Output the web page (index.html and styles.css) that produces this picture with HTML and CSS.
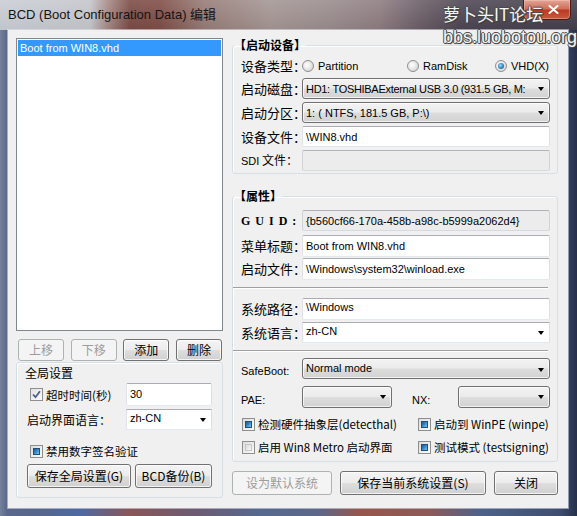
FILE: index.html
```
<!DOCTYPE html>
<html lang="zh-CN">
<head>
<meta charset="utf-8">
<title>BCD 编辑</title>
<link rel="stylesheet" href="styles.css">
</head>
<body>
<div class="window">
  <div class="titlebar">
    <div class="title">BCD (Boot Configuration Data) 编辑</div>
    <div class="close"><svg width="11" height="9" viewBox="0 0 11 9"><path d="M1.5 1 L9.5 8 M9.5 1 L1.5 8" stroke="#fff" stroke-width="2" stroke-linecap="round"/></svg></div>
  </div>
  <div class="client">
    <div class="left">
      <div class="list"><div class="item sel">Boot from WIN8.vhd</div></div>
      <div class="btnrow">
        <div class="btn dis w46">上移</div>
        <div class="btn dis w46">下移</div>
        <div class="btn w46">添加</div>
        <div class="btn w46">删除</div>
      </div>
      <div class="gbox">
        <div class="gbox-title">全局设置</div>
        <div class="grow r1">
          <div class="chk"><span class="cb checked"><svg width="11" height="11" viewBox="0 0 11 11"><path d="M2 5.5 L4.5 8.2 L9 2.2" fill="none" stroke="#4a5d8c" stroke-width="1.8"/></svg></span><span>超时时间(秒)</span></div>
          <div class="tb tb-timeout">30</div>
        </div>
        <div class="grow r2">
          <div class="glabel">启动界面语言：</div>
          <div class="ecombo w86"><span class="ct">zh-CN</span><i class="arrow"></i></div>
        </div>
        <div class="grow r3">
          <div class="chk"><span class="cb fill"></span><span>禁用数字签名验证</span></div>
        </div>
        <div class="grow r4">
          <div class="btn w104">保存全局设置(G)</div>
          <div class="btn w77">BCD备份(B)</div>
        </div>
      </div>
    </div>
    <div class="right">
      <fieldset class="grp g1">
        <legend>【启动设备】</legend>
        <div class="frow fr-type">
          <div class="flabel">设备类型：</div>
          <div class="radios">
            <div class="rad rw1"><span class="rb"></span><span>Partition</span></div>
            <div class="rad rw2"><span class="rb"></span><span>RamDisk</span></div>
            <div class="rad"><span class="rb on"></span><span>VHD(X)</span></div>
          </div>
        </div>
        <div class="frow mt3">
          <div class="flabel">启动磁盘：</div>
          <div class="combo w248"><span class="ct tight">HD1: TOSHIBAExternal USB 3.0 (931.5 GB, M:</span><i class="arrow"></i></div>
        </div>
        <div class="frow mt3">
          <div class="flabel">启动分区：</div>
          <div class="combo w248"><span class="ct">1: ( NTFS, 181.5 GB, P:\)</span><i class="arrow"></i></div>
        </div>
        <div class="frow mt3">
          <div class="flabel">设备文件：</div>
          <div class="tb w248 h21 mid">\WIN8.vhd</div>
        </div>
        <div class="frow mt3">
          <div class="flabel sdi"><span class="lat">SDI</span> 文件：</div>
          <div class="tb ro w248 h21"></div>
        </div>
      </fieldset>
      <fieldset class="grp g2">
        <legend>【属性】</legend>
        <div class="frow mt7">
          <div class="flabel guid">GUID:</div>
          <div class="tb ro w248 h21 mid">{b560cf66-170a-458b-a98c-b5999a2062d4}</div>
        </div>
        <div class="frow mt4">
          <div class="flabel">菜单标题：</div>
          <div class="tb w248 h22 mid">Boot from WIN8.vhd</div>
        </div>
        <div class="frow mt1">
          <div class="flabel">启动文件：</div>
          <div class="tb w248 h22 mid">\Windows\system32\winload.exe</div>
        </div>
        <div class="sep"></div>
        <div class="frow mt9">
          <div class="flabel">系统路径：</div>
          <div class="tb w248 h22">\Windows</div>
        </div>
        <div class="frow mt2">
          <div class="flabel">系统语言：</div>
          <div class="ecombo w248 h21"><span class="ct">zh-CN</span><i class="arrow"></i></div>
        </div>
        <div class="sep"></div>
        <div class="frow mt6">
          <div class="flabel lat low">SafeBoot:</div>
          <div class="combo w248 top"><span class="ct">Normal mode</span><i class="arrow"></i></div>
        </div>
        <div class="frow mt7 h22row">
          <div class="flabel lat low">PAE:</div>
          <div class="combo w90 h22"><span class="ct"></span><i class="arrow"></i></div>
          <div class="flabel lat low nx">NX:</div>
          <div class="combo w92 h22"><span class="ct"></span><i class="arrow"></i></div>
        </div>
        <div class="crow mt8">
          <div class="chk c1"><span class="cb fill"></span><span>检测硬件抽象层(detecthal)</span></div>
          <div class="chk"><span class="cb fill"></span><span>启动到 WinPE (winpe)</span></div>
        </div>
        <div class="crow mt7">
          <div class="chk c1"><span class="cb"></span><span>启用 Win8 Metro 启动界面</span></div>
          <div class="chk"><span class="cb fill"></span><span>测试模式 (testsigning)</span></div>
        </div>
      </fieldset>
      <div class="bottom">
        <div class="btn dis b1">设为默认系统</div>
        <div class="btn b2">保存当前系统设置(S)</div>
        <div class="btn b3">关闭</div>
      </div>
    </div>
  </div>
  <div class="wm wm1">萝卜头IT论坛</div>
  <div class="wm wm2">bbs.luobotou.org</div>
</div>
</body>
</html>
```
FILE: styles.css
```
* { box-sizing: border-box; }
html, body { margin: 0; padding: 0; }
body {
  width: 577px; height: 516px; overflow: hidden;
  font-family: "Liberation Sans", "Noto Sans CJK SC", sans-serif;
  font-size: 11px; color: #000;
}
.window {
  position: relative;
  width: 577px; height: 516px;
  display: flex; flex-direction: column;
  background:
    linear-gradient(90deg, #75819c 0px, #5a688c 7px, #56668c 40px, #4d6aa2 80px, #8a5658 130px, #6f5a70 190px, #56698f 260px, #5e6788 320px, #96564c 360px, #8c5a58 430px, #4e6289 480px, #3f4e70 560px, #26304a 577px);
}
.titlebar {
  flex: none; height: 30px;
  display: flex; align-items: flex-start;
  padding-left: 8px;
  background:
    linear-gradient(180deg, rgba(255,255,255,0.12), rgba(0,0,0,0.04)),
    linear-gradient(90deg, #c9cdd4 0px, #c4c6cb 90px, #a48884 108px, #7a4a44 130px, #7e4c45 160px, #967b76 205px, #a39593 270px, #998b8c 330px, #8c7b80 380px, #6a5c66 420px, #4d4552 460px, #433e4c 577px);
}
.title {
  margin-top: 7px;
  font-size: 13px; line-height: 16px; color: #141414;
  white-space: nowrap;
}
.close {
  margin-left: auto; margin-right: 6px;
  width: 48px; height: 20px;
  display: flex; align-items: center; justify-content: center;
  padding-left: 12px;
  border: 1px solid #4a1c18; border-top: none;
  border-radius: 0 0 5px 5px;
  background: linear-gradient(180deg, #e4a596 0%, #d0705d 45%, #bb3a22 55%, #c85a40 100%);
  box-shadow: inset 0 0 0 1px rgba(255,220,210,0.35);
}
.client {
  flex: none;
  margin: 0 9px 0 8px;
  height: 478px;
  background: #f0f0f0;
  box-shadow: 0 0 0 1px rgba(225,230,240,0.55);
  display: flex; gap: 9px;
  padding: 8px 10px 0 8px;
}
.left { width: 207px; flex: none; display: flex; flex-direction: column; }
.right { width: 326px; flex: none; display: flex; flex-direction: column; }

.list {
  height: 293px; background: #fff;
  border: 1px solid #828790; padding: 1px;
}
.item { height: 16px; line-height: 16px; padding-left: 2px; font-size: 11px; white-space: nowrap; }
.item.sel { background: #3399ff; color: #fff; }

.btn {
  display: flex; align-items: center; justify-content: center;
  height: 22px;
  border: 1px solid #707070; border-radius: 3px;
  background: linear-gradient(180deg, #f4f4f4 0%, #ececec 48%, #dedede 52%, #d0d0d0 100%);
  box-shadow: inset 0 0 0 1px rgba(255,255,255,0.75);
  font-family: "Noto Sans CJK SC", sans-serif; font-size: 12px; line-height: 16px;
  color: #000; white-space: nowrap;
}
.btn.dis {
  border-color: #adb2b5; background: #f4f4f4; box-shadow: none; color: #9c9c9c;
}
.btnrow { display: flex; justify-content: space-between; padding: 0 1px 0 2px; margin-top: 8px; }
.w46 { width: 46px; }
.w104 { width: 104px; height: 24px; }
.w77 { width: 77px; height: 24px; }

.gbox {
  margin-top: 1px; height: 136px;
  border: 1px solid #d5dfe5; border-radius: 3px;
  box-shadow: inset 1px 1px 0 #fff;
  display: flex; flex-direction: column;
  font-family: "Noto Sans CJK SC", sans-serif; font-size: 12px;
}
.gbox-title { margin-top: 2px; height: 16px; line-height: 16px; padding-left: 8px; }
.grow { display: flex; align-items: center; padding-right: 10px; }
.grow.r1 { margin-top: 2px; height: 23px; padding-left: 13px; }
.grow.r2 { margin-top: 3px; height: 21px; padding-left: 10px; }
.grow.r3 { margin-top: 13px; height: 16px; padding-left: 13px; }
.grow.r4 { margin-top: 5px; height: 24px; padding-left: 10px; gap: 4px; }
.glabel { line-height: 16px; }

.chk { display: flex; align-items: center; gap: 3px; line-height: 16px; white-space: nowrap;
  font-family: "Noto Sans CJK SC", sans-serif; font-size: 11.5px; }
.cb {
  flex: none; width: 13px; height: 13px;
  border: 1px solid #8e8f8f;
  background: linear-gradient(135deg, #dcdcdc, #fbfbfb);
  padding: 2px; display: flex;
}
.cb::before {
  content: ""; flex: 1;
  background: linear-gradient(135deg, #dadada, #f7f7f7);
  border: 1px solid #c6c6c6;
}
.cb.fill::before {
  background: linear-gradient(135deg, #1b5c9a 0%, #2f87c8 45%, #7cc9ef 100%);
  border-color: #1f4f7e;
}
.cb.checked { padding: 0; background: linear-gradient(135deg, #e0e0e0, #fdfdfd); }
.cb.checked::before { display: none; }

.tb {
  background: #fff;
  border: 1px solid; border-color: #abadb3 #dbdfe6 #e3e9ef #e2e3ea;
  border-radius: 2px;
  font-size: 11px; line-height: 14px;
  padding: 1px 3px; white-space: nowrap; overflow: hidden;
  font-family: "Liberation Sans", sans-serif;
}
.tb.mid { display: flex; align-items: center; padding-top: 0; padding-bottom: 0; }
.tb.ro { background: #ececec; border-color: #b0b3b8 #d0d3d8 #d6d9de #d0d3d8; }
.tb-timeout { margin-left: auto; width: 86px; height: 23px; padding-top: 3px; }

.ecombo, .combo {
  display: flex; align-items: center;
  font-size: 11px; line-height: 14px; font-family: "Liberation Sans", sans-serif;
  white-space: nowrap; overflow: hidden;
}
.ct { flex: 0 1 auto; min-width: 0; overflow: hidden; margin-right: 8px; }
.ct.tight { letter-spacing: -0.3px; }
.ecombo {
  background: #fff;
  border: 1px solid; border-color: #abadb3 #dbdfe6 #e3e9ef #e2e3ea;
  padding-left: 3px; align-items: flex-start; padding-top: 1px;
}
.ecombo.w86 { margin-left: auto; width: 86px; height: 21px; }
.combo {
  height: 21px;
  border: 1px solid #707070; border-radius: 3px;
  background: linear-gradient(180deg, #f3f3f3 0%, #ebebeb 48%, #dddddd 52%, #d2d2d2 100%);
  box-shadow: inset 0 0 0 1px rgba(255,255,255,0.7);
  padding-left: 3px;
}
.combo.top { align-items: flex-start; padding-top: 2px; }
.combo .arrow, .ecombo .arrow { align-self: center; }
.arrow {
  flex: none; margin-left: auto; margin-right: 5px;
  width: 0; height: 0;
  border-left: 3.5px solid transparent; border-right: 3.5px solid transparent;
  border-top: 4px solid #000;
}
.w248 { width: 248px; }
.w90 { width: 90px; }
.w92 { width: 92px; }
.h21 { height: 21px; }
.h22 { height: 22px; }

.grp {
  margin: 0; min-width: 0;
  border: 1px solid #d5dfe5; border-radius: 3px;
  box-shadow: inset 1px 1px 0 #fff;
  padding: 0 7px 2px 8px;
}
.grp legend {
  padding: 0; margin-left: -7px;
  height: 14px; line-height: 14px;
  font-family: "Noto Sans CJK SC", sans-serif; font-weight: bold; font-size: 12px;
}
.g2 { margin-top: 15px; padding-bottom: 6px; }
.frow { display: flex; align-items: center; }
.fr-type { margin-top: 5px; height: 18px; }
.flabel {
  flex: none; width: 61px;
  font-family: "Noto Sans CJK SC", sans-serif; font-size: 13px; line-height: 16px;
  white-space: nowrap;
}
.flabel .lat, .flabel.lat { font-family: "Liberation Sans", sans-serif; font-size: 11px; }
.flabel.sdi { font-size: 12px; }
.flabel.guid {
  font-family: "Liberation Serif", serif; font-weight: bold; font-size: 12px;
  letter-spacing: 5px;
}
.flabel.low { align-self: flex-end; line-height: 14px; margin-bottom: 1px; }
.flabel.nx { width: 46px; margin-left: 20px; }
.h22row { height: 22px; }
.radios { display: flex; align-items: center; }
.rad { display: flex; align-items: center; gap: 4px; font-size: 11px; white-space: nowrap; }
.rw1 { width: 105px; }
.rw2 { width: 88px; }
.rb {
  flex: none; width: 12px; height: 12px; border-radius: 50%;
  border: 1px solid #8e8f8f;
  background: radial-gradient(circle at 40% 40%, #ffffff 0%, #e6e6e6 50%, #c8c8c8 100%);
  display: flex; align-items: center; justify-content: center;
}
.rb.on::before {
  content: ""; width: 6px; height: 6px; border-radius: 50%;
  background: radial-gradient(circle at 40% 40%, #9fe0fa 0%, #2f7fc0 55%, #1a4a80 100%);
}
.sep {
  height: 2px; margin: 7px 2px 0 -8px;
  border-top: 1px solid #a0a0a0; border-bottom: 1px solid #fff;
}
.crow { display: flex; align-items: center; height: 16px; padding-left: 1px; }
.chk.c1 { width: 176px; }
.mt1 { margin-top: 1px; }
.mt2 { margin-top: 2px; }
.mt3 { margin-top: 3px; }
.mt4 { margin-top: 4px; }
.mt6 { margin-top: 6px; }
.mt7 { margin-top: 7px; }
.mt8 { margin-top: 8px; }
.mt9 { margin-top: 9px; }
.bottom { display: flex; gap: 8px; margin-top: 9px; }
.bottom .btn { height: 24px; }
.b1 { width: 100px; }
.b2 { width: 146px; }
.b3 { width: 64px; }

.wm {
  position: absolute;
  color: #f6f6f6; white-space: nowrap;
  text-shadow: 1px 0 0 #4a4a4a, -1px 0 0 #4a4a4a, 0 1px 0 #4a4a4a, 0 -1px 0 #4a4a4a, 1px 1px 1px #333;
}
.wm1 { left: 443px; top: 2px; font-family: "Noto Sans CJK SC", sans-serif; font-size: 17px; line-height: 24px; }
.wm2 { left: 443px; top: 25px; font-family: "Liberation Sans", sans-serif; font-size: 18px; line-height: 24px; }
```
